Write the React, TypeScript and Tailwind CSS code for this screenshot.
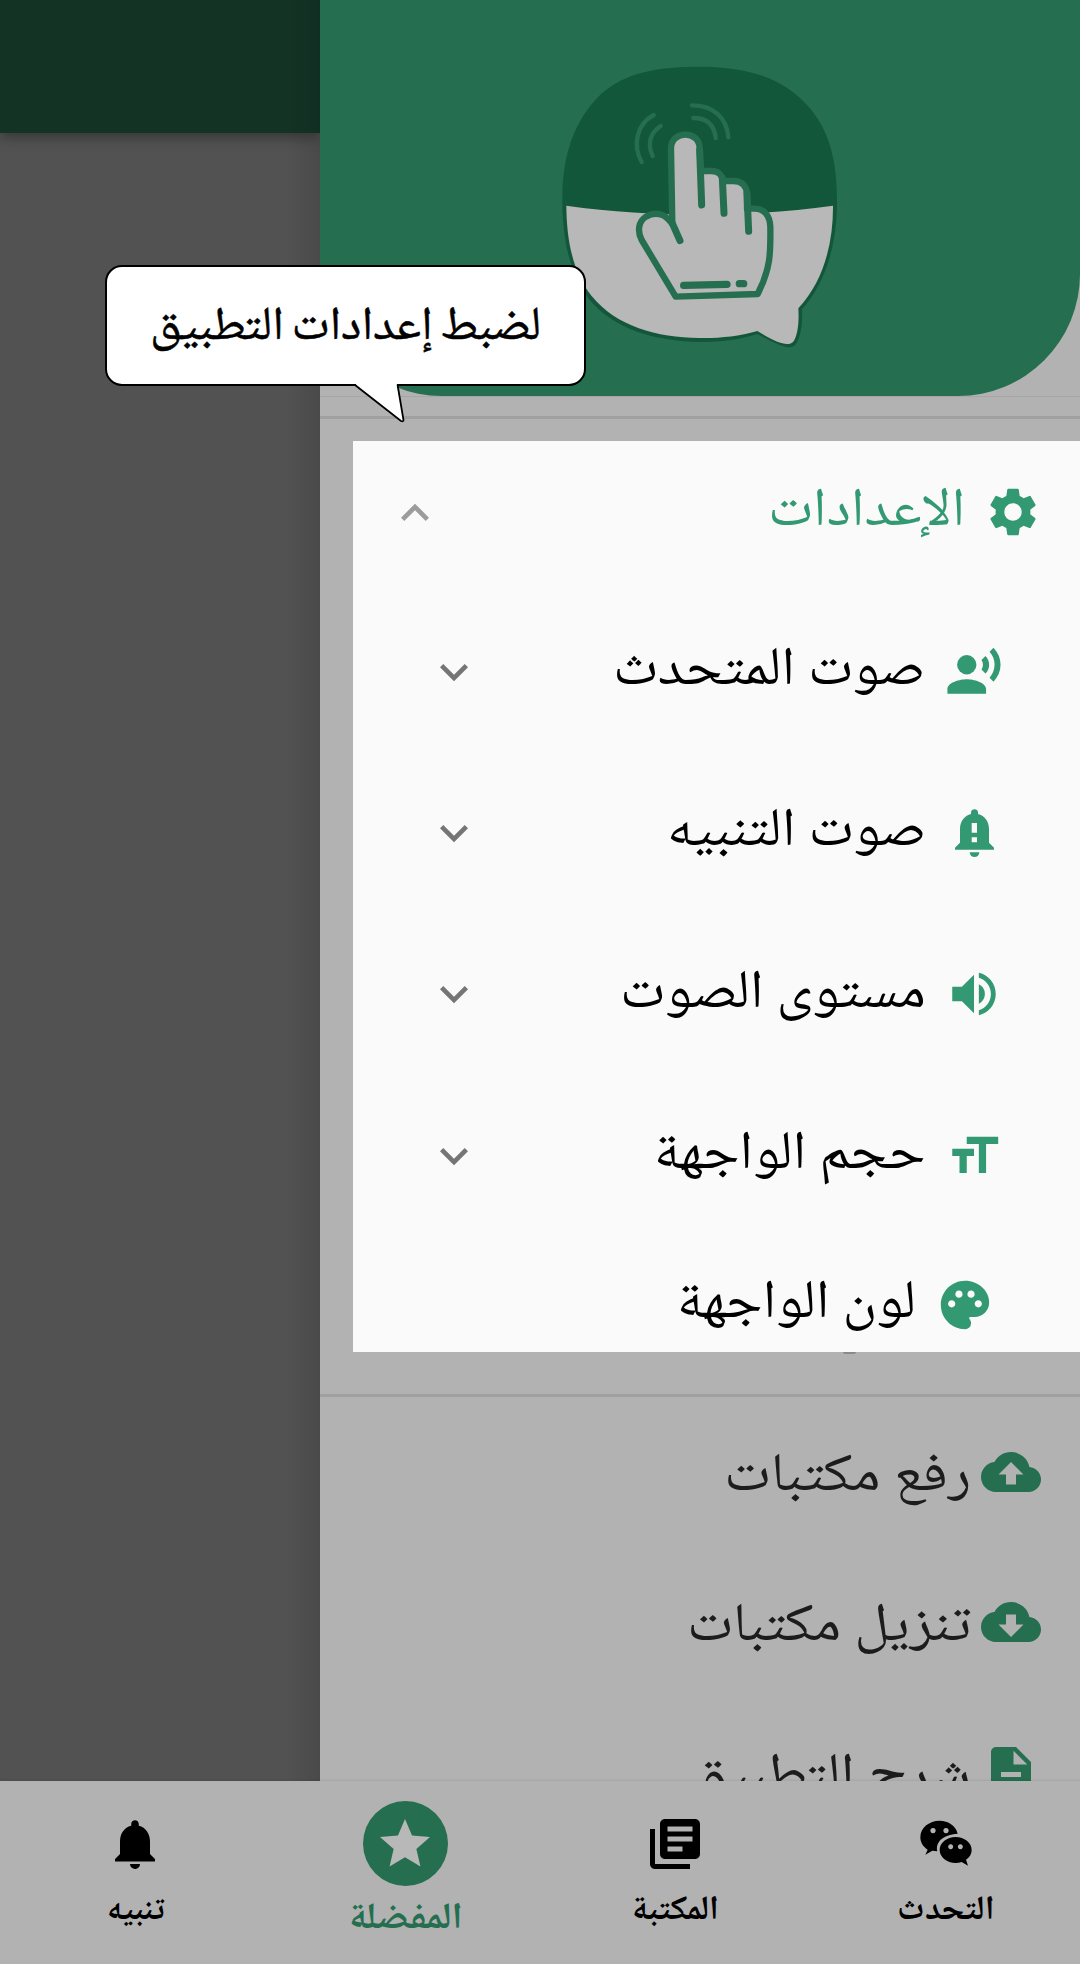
import { useLayoutEffect, useRef, useState } from "react";
import type { ReactNode } from "react";
import {
  MdSettings,
  MdRecordVoiceOver,
  MdVolumeUp,
  MdFormatSize,
  MdPalette,
  MdCloudUpload,
  MdCloudDownload,
  MdDescription,
  MdNotifications,
  MdLibraryBooks,
  MdStar,
  MdExpandMore,
  MdExpandLess,
} from "react-icons/md";

/* Arabic label whose glyph run is stretched to an exact width. */
function Label({ text, width, className = "" }: { text: string; width: number; className?: string }) {
  const ref = useRef<HTMLSpanElement>(null);
  const [scale, setScale] = useState(1);
  useLayoutEffect(() => {
    if (ref.current) setScale(width / ref.current.offsetWidth);
  }, [width, text]);
  return (
    <span dir="rtl" className={`flex shrink-0 justify-start whitespace-nowrap leading-none ${className}`} style={{ width }}>
      <span ref={ref} className="inline-block shrink-0 origin-right" style={{ transform: `scaleX(${scale})` }}>
        {text}
      </span>
    </span>
  );
}

function Logo() {
  return (
    <svg viewBox="0 0 960 990" className="h-[330px] w-[320px]" fill="none" strokeLinecap="round" strokeLinejoin="round">
      <path d="M478 80C610 80 730 108 810 205C872 280 892 370 891 492C890 610 860 725 786 808C788 850 784 885 768 912C752 935 715 915 652 882C595 900 545 906 478 906C350 904 220 870 145 775C90 700 66 600 67 470C68 340 105 240 180 165C255 95 360 80 478 80Z" fill="#13573b" />
      <path d="M79 497C345 533 610 534 879 497C880 610 850 725 775 805C778 850 772 885 762 902C748 922 715 912 652 873C595 889 540 895 478 894C350 892 230 860 155 768C100 700 80 605 79 497Z" fill="#b8b8b8" />
      <path d="M407 770L305 600C292 575 294 545 318 530C345 514 374 521 392 546L397 552L393 325C393 270 479 270 479 325L482 393H515C535 393 547 406 548 423H580C605 423 620 437 621 462V506H640C675 504 690 530 691 560C692 640 692 685 653 762Z" fill="#b8b8b8" stroke="#256e50" strokeWidth="19" />
      <path d="M397 550L420 602M479 330L485 495M547 415L552 520M621 460L626 574" stroke="#256e50" strokeWidth="21" />
      <path d="M431 736L561 733M598 731H611" stroke="#256e50" strokeWidth="22" />
      <path d="M341 225C290 252 277 315 305 366M362 258C328 280 322 315 338 348M456 196C520 196 560 232 565 292M460 234C500 234 523 255 527 294" stroke="#256e50" strokeWidth="13" />
    </svg>
  );
}

function BellAlert() {
  return (
    <svg viewBox="45 42 174 174" className="size-[58px]" fill="currentColor" fillRule="evenodd">
      <path d="M75 179V173L90 158V117C90 93 105 76 123 72V68A10.500 10.500 0 0 1 144 68V72C162 76 177 93 177 117V158L192 173V179ZM125 99V128H141V99ZM125 142V157H141V142Z" />
      <path d="M119 187H148A14.500 14 0 0 1 119 187Z" />
    </svg>
  );
}

function ChatFaces() {
  return (
    <svg viewBox="30 27 180 180" className="size-[60px]" fill="currentColor" fillRule="evenodd">
      <path d="M103 47C74 47 46 67 46 97C46 112 54 125 68 134L61 149L82 137L97 139C91 112 112 89 158 86C153 63 131 47 103 47ZM84 69a8 8 0 1 0 .1 0ZM123 69a8 8 0 1 0 .1 0Z" />
      <path d="M152 96C126 96 104 113 104 135C104 157 126 174 152 174C158 174 164 173 170 171L189 182L183 164C194 157 200 147 200 135C200 113 178 96 152 96ZM137 117.500a7.500 7.500 0 1 0 .1 0ZM166 117.500a7.500 7.500 0 1 0 .1 0Z" />
    </svg>
  );
}

function SubRow({ icon, text, width }: { icon: ReactNode; text: string; width: number }) {
  return (
    <div className="flex h-[161.3px] shrink-0 items-center pr-[77px] pl-[73px] text-[54px] text-black">
      <span className="text-[58px] text-[#329972]">{icon}</span>
      <Label text={text} width={width} className="mt-[1px] mr-[19px]" />
      <MdExpandMore className="mr-auto size-[56px] text-[#757575]" />
    </div>
  );
}

function DrawerRow({ icon, text, width }: { icon: ReactNode; text: string; width: number }) {
  return (
    <div className="flex h-[150px] shrink-0 items-center pr-[39px] text-[54px] text-[#1c1c1c]">
      <span className="text-[60px] text-[#256e50]">{icon}</span>
      <Label text={text} width={width} className="mt-[11px] mr-[10px]" />
    </div>
  );
}

function Tab({ icon, text, width }: { icon: ReactNode; text: string; width: number }) {
  return (
    <div className="flex w-[270px] flex-col items-center pt-[33px] text-[34px] font-bold text-black">
      <span className="text-[60px]">{icon}</span>
      <Label text={text} width={width} className="mt-[21px] ml-[1px]" />
    </div>
  );
}

export default function App() {
  return (
    <div className="relative h-[1964px] w-[1080px] overflow-hidden bg-[#b2b2b2] font-['Noto_Naskh_Arabic','Noto_Sans_Arabic','DejaVu_Sans',sans-serif]">
      <div className="flex h-[1781px] overflow-hidden">
        <div className="relative w-[320px] shrink-0 overflow-hidden bg-[#525252]">
          <div className="h-[133px] bg-[#133325] shadow-[0_3px_14px_rgba(0,0,0,0.4)]" />
          <div className="absolute inset-y-0 right-0 w-[34px] bg-linear-to-r from-transparent to-black/10" />
        </div>
        <aside dir="rtl" className="flex w-[760px] shrink-0 flex-col bg-[#b2b2b2]">
          <div className="h-[397px] shrink-0 border-b border-[#a6a6a6]">
            <div className="flex h-[396px] justify-end rounded-b-[122px] bg-[#256e50] pt-[40px] pl-[220px]">
              <Logo />
            </div>
          </div>
          <div className="mt-[19px] h-[3px] shrink-0 bg-[#a0a0a0]" />
          <section className="mt-[22px] ml-[33px] flex h-[911px] shrink-0 flex-col overflow-hidden bg-[#fafafa]">
            <div className="mb-[8px] flex h-[142px] shrink-0 items-center pr-[38px] pl-[34px] text-[54px] text-[#329972]">
              <MdSettings className="size-[58px]" />
              <Label text="الإعدادات" width={197} className="mt-[2px] mr-[19px]" />
              <MdExpandLess className="mt-[1px] mr-auto size-[56px] text-[#9c9c9c]" />
            </div>
            <SubRow icon={<MdRecordVoiceOver />} text="صوت المتحدث" width={313} />
            <SubRow icon={<BellAlert />} text="صوت التنبيه" width={259} />
            <SubRow icon={<MdVolumeUp />} text="مستوى الصوت" width={306} />
            <SubRow icon={<MdFormatSize />} text="حجم الواجهة" width={272} />
            <div className="flex h-[138px] shrink-0 items-center pr-[86px] text-[54px] text-black">
              <MdPalette className="size-[58px] text-[#329972]" />
              <Label text="لون الواجهة" width={239} className="mr-[20px]" />
            </div>
          </section>
          <div className="h-[42px] shrink-0 pr-[224px]">
            <div className="h-[2px] w-[13px] rounded-b-full bg-[#8a8a8a]" />
          </div>
          <div className="h-[3px] shrink-0 bg-[#a0a0a0]" />
          <DrawerRow icon={<MdCloudUpload />} text="رفع مكتبات" width={247} />
          <DrawerRow icon={<MdCloudDownload />} text="تنزيل مكتبات" width={284} />
          <DrawerRow icon={<MdDescription />} text="شرح التطبيق" width={282} />
        </aside>
      </div>
      <nav className="relative flex h-[183px] bg-[#b2b2b2] shadow-[0_-1px_2px_rgba(0,0,0,0.08)]">
        <Tab icon={<MdNotifications />} text="تنبيه" width={58} />
        <div className="flex w-[270px] flex-col items-center pt-[20px] text-[37px] font-bold text-[#256e50]">
          <span className="flex size-[85px] items-center justify-center rounded-full bg-[#256e50]">
            <MdStar className="size-[60px] text-[#b8b8b8]" />
          </span>
          <Label text="المفضلة" width={114} className="mt-[15px] ml-[2px]" />
        </div>
        <Tab icon={<MdLibraryBooks />} text="المكتبة" width={87} />
        <Tab icon={<ChatFaces />} text="التحدث" width={98} />
      </nav>
      <div className="absolute top-[265px] left-[105px] flex h-[121px] w-[481px] items-center justify-center rounded-[17px] border-2 border-black bg-white text-[47px] text-black">
        <Label text="لضبط إعدادات التطبيق" width={391} className="mt-[8px] [word-spacing:-3px] [-webkit-text-stroke:0.5px_black]" />
        <svg viewBox="0 0 60 40" className="absolute top-[116px] left-[246px] h-[40px] w-[60px]">
          <path d="M2 0H44V2L50.5 38Q50 39 48 38L4 3Z" fill="#fff" />
          <path d="M2 2L48 38Q50.500 39 50.500 37L44.500 1.500" fill="none" stroke="#000" strokeWidth="1.800" />
        </svg>
      </div>
    </div>
  );
}
